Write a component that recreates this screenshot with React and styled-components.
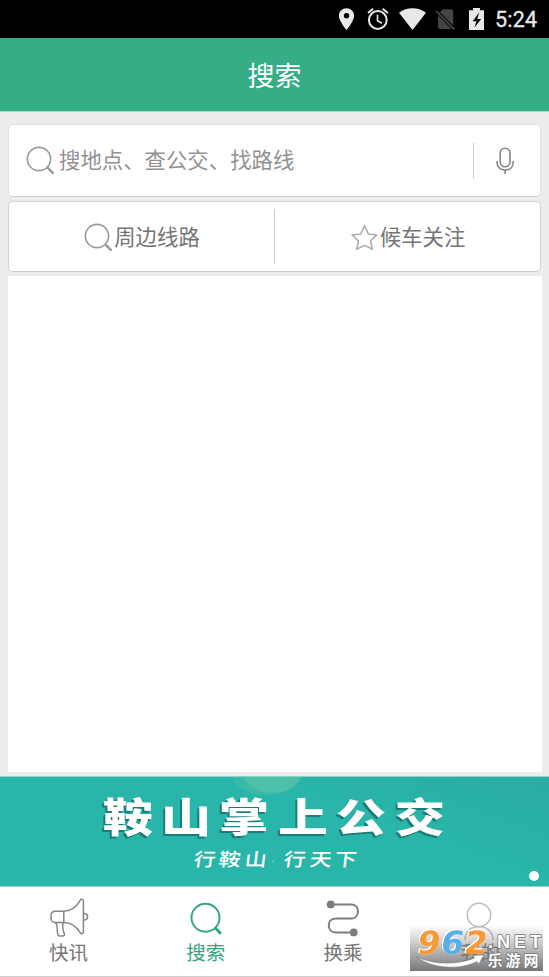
import React from "react";
import styled, { createGlobalStyle, css } from "styled-components";

const GlobalStyle = createGlobalStyle`
  * { box-sizing: border-box; }
  body {
    margin: 0;
    background: #ececec;
    font-family: Roboto, "Noto Sans CJK SC", sans-serif;
  }
`;

const Screen = styled.div`
  display: flex;
  flex-direction: column;
  width: 549px;
  height: 977px;
  overflow: hidden;
  background: #ececec;
`;

const StatusBar = styled.div`
  flex: none;
  height: 38px;
  background: #000;
  svg { display: block; }
`;

const Clock = styled.text`
  font: 400 21.5px Roboto, sans-serif;
  fill: #e8e8e8;
  stroke: #e8e8e8;
  stroke-width: 0.3px;
`;

const Header = styled.header`
  flex: none;
  display: flex;
  align-items: center;
  justify-content: center;
  height: 74px;
  padding-top: 6px;
  background: #35ad87;
  border-bottom: 1px solid #a5dcc9;
  color: #fff;
  font-size: 27px;
  line-height: 1;
`;

const Content = styled.main`
  flex: none;
  display: flex;
  flex-direction: column;
  height: 664px;
  padding: 12px 7px 4px 8px;
`;

const Card = styled.section`
  flex: none;
  display: flex;
  align-items: center;
  width: 533px;
  height: ${(p) => p.$height}px;
  margin-bottom: ${(p) => p.$gap}px;
  background: #fff;
  border: 1px solid ${(p) => p.$line};
  border-bottom-color: #cecece;
  border-radius: 5px;
`;

const Placeholder = styled.div`
  flex: 1;
  display: flex;
  align-items: center;
  gap: 4px;
  padding-left: 17px;
  color: #929292;
  font-size: 21.4px;
  line-height: 30px;
  white-space: nowrap;
  svg { margin-top: -1px; }
`;

const MicButton = styled.div`
  display: flex;
  align-items: center;
  justify-content: center;
  width: 67px;
  height: 36px;
  padding-right: 4px;
  border-left: 1px solid #ccc;
`;

const Shortcut = styled.div`
  flex: 1;
  display: flex;
  align-items: center;
  justify-content: center;
  gap: ${(p) => p.$gap}px;
  height: 55px;
  padding: 2px 0 0 1px;
  color: #757575;
  font-size: 21.4px;
  line-height: 30px;
  white-space: nowrap;
  svg { margin-top: -1px; }
  & + & { border-left: 1px solid #ccc; }
`;

const MapPanel = styled.div`
  flex: 1;
  width: 534px;
  background: #fff;
`;

const Banner = styled.section`
  position: relative;
  flex: none;
  height: 111px;
  overflow: hidden;
  background: linear-gradient(20deg, #29b5a9 0 65%, #2aada3 100%);
  border-top: 1px solid #93d3ca;
  border-bottom: 1px solid #9ccfc9;
`;

const BannerArt = styled.svg`
  display: block;
`;

const BannerTitle = styled.text`
  font-family: "Noto Sans CJK SC", sans-serif;
  font-weight: 900;
  font-size: 48px;
  fill: #fff;
`;

const TitleGroup = styled.g`
  filter: drop-shadow(-1.5px 2px 0.4px #187d78);
`;

const BannerSlogan = styled.text`
  font-family: "Noto Sans CJK SC", sans-serif;
  font-weight: 500;
  font-size: 22px;
  fill: #fff;
`;

const PageDot = styled.span`
  position: absolute;
  right: 10px;
  bottom: 5px;
  width: 10px;
  height: 10px;
  border-radius: 50%;
  background: #fff;
`;

const TabBar = styled.nav`
  position: relative;
  flex: none;
  display: flex;
  height: 90px;
  background: #fff;
  border-bottom: 1px solid #cfcfcf;
`;

const Tab = styled.div`
  flex: 1;
  display: flex;
  flex-direction: column;
  align-items: center;
  padding-top: 10px;
  color: #757575;
  font-size: 19.5px;
  line-height: 28px;
  svg { flex: none; }
  ${(p) => p.$active && css`color: #35a57e;`}
`;

const Watermark = styled.svg`
  position: absolute;
  left: 410px;
  top: 38px;
`;

const LogoDigits = styled.g`
  filter: drop-shadow(0.7px 0.7px 0 #fff) drop-shadow(-0.7px -0.7px 0 #fff);
`;

const LogoDigit = styled.text`
  font-family: "DejaVu Sans", sans-serif;
  font-weight: bold;
  font-size: 32px;
`;

const SiteName = styled.text`
  font-family: ${(p) => (p.$cjk ? '"Noto Sans CJK SC"' : '"Liberation Sans"')}, sans-serif;
  font-weight: bold;
  font-size: ${(p) => p.$size}px;
  fill: #fff;
  stroke: #777;
  stroke-width: 1.6px;
  stroke-linejoin: round;
  paint-order: stroke;
`;

function SearchIcon() {
  return (
    <svg width="29" height="29" viewBox="0 0 29 29" fill="none" stroke="#999">
      <circle cx="13" cy="13" r="11.6" strokeWidth="1.6" />
      <path d="M21.2 21.4 27.5 27.6" strokeWidth="2.4" />
    </svg>
  );
}

function MicIcon() {
  return (
    <svg width="18" height="28" viewBox="0 0 18 28" fill="none" stroke="#85858a" strokeWidth="1.6">
      <rect x="4.2" y="1.2" width="9.8" height="18.6" rx="4.9" />
      <path d="M1 14v1c0 5 3.4 8 8.1 8s8.1-3 8.1-8v-1M9.1 23v4" />
    </svg>
  );
}

function StarIcon() {
  return (
    <svg width="27" height="27" viewBox="0 0 27 27" fill="none" stroke="#aaa" strokeWidth="1.5">
      <path d="m13.5 1.8 3.9 8.2 8.2 1.1-6.1 5.9 1.8 8.2-7.8-3.9-7.8 3.9 1.8-8.2-6.1-5.9 8.2-1.1Z" />
    </svg>
  );
}

function MegaphoneIcon() {
  return (
    <svg width="42" height="43" viewBox="0 0 42 43" fill="none" stroke="#858585" strokeWidth="1.5" strokeLinejoin="round">
      <path d="M15.8 14.2H7.2c-2.4 0-4.2 1.8-4.2 4v3.2c0 2.3 1.8 4 4.2 4h8.6c8.2 0 12.8 4.2 16.4 10.3 1.1 1.8 3 1.4 3.2-.7V4.2c-.2-2.1-2.1-2.6-3.2-.8-3.6 6.1-8.2 10.8-16.4 10.8Zm0 0v11.2" />
      <path d="M35.7 16.4c5.2 0 5.2 6.6 0 6.6M7.7 25.5c2.6 3.6.8 8.4 2.3 12.2.4 1 1 1.4 2 1.4h2.4c1.8 0 2.5-1 1.9-2.5-1.6-3.4-2-6.8-1.2-11.1" />
    </svg>
  );
}

function ActiveSearchIcon() {
  return (
    <svg width="42" height="43" viewBox="0 0 42 43" fill="none" stroke="#35a57e">
      <circle cx="20.5" cy="20.8" r="14" strokeWidth="1.9" />
      <path d="m29.8 30.5 6.1 6.2" strokeWidth="3" />
    </svg>
  );
}

function RouteIcon() {
  return (
    <svg width="42" height="43" viewBox="0 0 42 43" fill="none" stroke="#7d7d7d" strokeWidth="2">
      <path d="M9.5 7.4h20.2c8.3 0 8.3 14 0 14H13.5c-9 0-9 14 0 14h17.2" />
      <g fill="#7d7d7d" stroke="none">
        <circle cx="8.7" cy="7.4" r="3.9" />
        <circle cx="31.7" cy="35.4" r="3.9" />
      </g>
    </svg>
  );
}

function PersonIcon() {
  return (
    <svg width="42" height="43" viewBox="0 0 42 43" fill="none" stroke="#bdbdbd" strokeWidth="1.5">
      <circle cx="20" cy="18" r="11.7" />
      <path d="M6 43c0-18 28-18 28 0" />
    </svg>
  );
}

function StatusIcons() {
  return (
    <svg width="549" height="38" viewBox="0 0 549 38">
      <path fill="#e8e8e8" fillRule="evenodd" d="M346.5 8.2c-4.3 0-7.6 3.3-7.6 7.5 0 5.3 7.6 14.3 7.6 14.3s7.6-9 7.6-14.3c0-4.2-3.3-7.5-7.6-7.5Zm0 10.2a2.7 2.7 0 1 1 0-5.4 2.7 2.7 0 0 1 0 5.4Z" />
      <g fill="none" stroke="#e8e8e8" strokeWidth="2">
        <circle cx="377.8" cy="20" r="8.9" />
        <path d="M377.5 14.7v6l4.4 2.6" strokeWidth="1.6" />
        <path d="m368 13 5.1-4.3M387.8 13l-5.1-4.3" />
      </g>
      <path fill="#e8e8e8" d="M399 12.7c8-5.8 19-5.8 27 0L412.5 30Z" />
      <path fill="#444" d="m443 9.2h8.2c1.2 0 2 .8 2 2v14.2L439.9 12.3Zm-5 6 13.5 13.7H440c-1.2 0-2-.8-2-2Z" />
      <path d="m436.2 11.2 18.3 18.3" stroke="#444" strokeWidth="1.8" />
      <path fill="#e8e8e8" d="M473 8h7v2.2h4V30h-15V10.2h4Z" />
      <path fill="#000" d="m479.3 12.2-6.6 9h3.8l-2 6.3 6.7-8.6h-4Z" />
      <Clock x="495" y="27.3" textLength="42">5:24</Clock>
    </svg>
  );
}

const TITLE = [["鞍", 103], ["山", 161], ["掌", 219], ["上", 278], ["公", 336], ["交", 395]];
const SLOGAN = [["行", 193], ["鞍", 218], ["山", 244], ["行", 283], ["天", 309], ["下", 334]];

function BannerLettering() {
  return (
    <BannerArt width="549" height="109" viewBox="0 777 549 109">
      <ellipse cx="267" cy="770" rx="37" ry="25" fill="#9ee0b0" opacity=".14" />
      <ellipse cx="272" cy="772" rx="29" ry="21" fill="#d8e7a0" opacity=".12" />
      <TitleGroup>
        <g transform="translate(0 832) scale(1.04 .82)">
          {TITLE.map(([char, x]) => (
            <BannerTitle key={x} x={x / 1.04} y="0">{char}</BannerTitle>
          ))}
        </g>
      </TitleGroup>
      <g transform="translate(0 866) skewX(-7) scale(1 .82)">
        {SLOGAN.map(([char, x]) => (
          <BannerSlogan key={x} x={x} y="0">{char}</BannerSlogan>
        ))}
      </g>
      <circle cx="273" cy="861.5" r="1" fill="#6fd0c0" />
    </BannerArt>
  );
}

function SiteWatermark() {
  return (
    <Watermark width="133" height="46" viewBox="0 0 133 46">
      <defs>
        <linearGradient id="shade" x1="0" y1="0" x2="0" y2="1">
          <stop offset="0" stopColor="#777" stopOpacity="0" />
          <stop offset="1" stopColor="#707070" stopOpacity=".95" />
        </linearGradient>
      </defs>
      <rect width="133" height="46" fill="url(#shade)" />
      <path d="M6.5 31.5c17 8.5 41 8.500 58 1.500l-1.500-2.500 11-.5-5.500 9.500-1.500-3c-17 9-46 7.500-60.500-5Z" fill="#fff" stroke="#777" strokeWidth=".6" />
      <LogoDigits>
        <g transform="translate(5 29) skewX(-9)">
          <LogoDigit x="1" y="0" textLength="23" lengthAdjust="spacingAndGlyphs" fill="#f79a35">9</LogoDigit>
          <LogoDigit x="24.500" y="0" textLength="23" lengthAdjust="spacingAndGlyphs" fill="#5aaee6">6</LogoDigit>
          <LogoDigit x="48" y="0" textLength="23" lengthAdjust="spacingAndGlyphs" fill="#f79a35">2</LogoDigit>
        </g>
      </LogoDigits>
      <SiteName $size="18" x="78" y="23" textLength="53">.NET</SiteName>
      <SiteName $cjk $size="15" x="77.500" y="41" textLength="51">乐游网</SiteName>
    </Watermark>
  );
}

export default function App() {
  return (
    <Screen>
      <GlobalStyle />
      <StatusBar><StatusIcons /></StatusBar>
      <Header>搜索</Header>
      <Content>
        <Card $height={73} $gap={4} $line="#e0e0e0">
          <Placeholder><SearchIcon />搜地点、查公交、找路线</Placeholder>
          <MicButton><MicIcon /></MicButton>
        </Card>
        <Card $height={71} $gap={4} $line="#d2d2d2">
          <Shortcut $gap={1}><SearchIcon />周边线路</Shortcut>
          <Shortcut $gap={2}><StarIcon />候车关注</Shortcut>
        </Card>
        <MapPanel />
      </Content>
      <Banner>
        <BannerLettering />
        <PageDot />
      </Banner>
      <TabBar>
        <Tab><MegaphoneIcon />快讯</Tab>
        <Tab $active><ActiveSearchIcon />搜索</Tab>
        <Tab><RouteIcon />换乘</Tab>
        <Tab><PersonIcon />我的</Tab>
        <SiteWatermark />
      </TabBar>
    </Screen>
  );
}
